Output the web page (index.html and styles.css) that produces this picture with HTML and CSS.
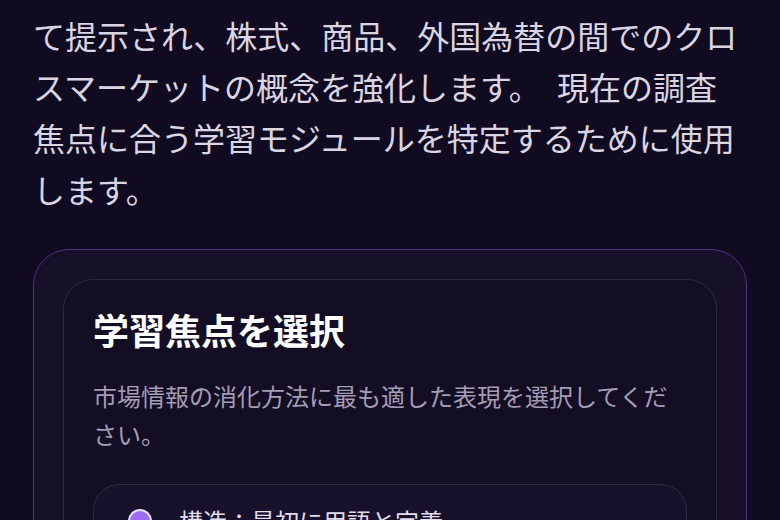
FILE: index.html
```html
<!DOCTYPE html>
<html lang="ja">
<head>
<meta charset="utf-8">
<title>学習焦点を選択</title>
<link rel="stylesheet" href="styles.css">
</head>
<body>
<main class="page">
  <p class="intro">て提示され、株式、商品、外国為替の間でのクロスマーケットの概念を強化します。 現在の調査焦点に合う学習モジュールを特定するために使用します。</p>
  <section class="shell">
    <div class="panel">
      <h2 class="panel-title">学習焦点を選択</h2>
      <p class="panel-sub">市場情報の消化方法に最も適した表現を選択してください。</p>
      <div class="options">
        <label class="option">
          <span class="radio"></span>
          <span class="option-text">構造：最初に用語と定義</span>
        </label>
      </div>
    </div>
  </section>
</main>
</body>
</html>
```

FILE: styles.css
```css
html, body {
  margin: 0;
  padding: 0;
  background: #110b21;
}
body {
  font-family: "Noto Sans CJK JP", "Noto Sans", sans-serif;
  overflow: hidden;
  height: 520px;
}
.page {
  padding: 10px 33px 40px;
}
.intro {
  margin: 0;
  font-size: 32px;
  line-height: 1.6;
  color: #d9d5e3;
  word-spacing: 9px;
}
.shell {
  margin-top: 34px;
  border: 1px solid #4e3389;
  border-radius: 36px;
  background: #171029;
  padding: 29px;
}
.panel {
  border: 1px solid #2f2844;
  border-radius: 30px;
  background: #140e25;
  padding: 26px 29px 29px;
}
.panel-title {
  margin: 0;
  font-size: 36px;
  line-height: 1.3;
  font-weight: 700;
  color: #ffffff;
}
.panel-sub {
  margin: 24px 0 0;
  font-size: 24px;
  line-height: 1.6;
  color: #a49db5;
}
.options {
  margin-top: 31px;
  display: flex;
  flex-direction: column;
  gap: 16px;
}
.option {
  display: flex;
  align-items: center;
  gap: 27px;
  border: 1px solid #302946;
  border-radius: 26px;
  background: #18112c;
  padding: 18px 34px;
}
.radio {
  flex: none;
  width: 20px;
  height: 20px;
  border-radius: 50%;
  border: 2px solid #ece2ff;
  background: #9c6cf2;
}
.option-text {
  font-size: 24px;
  line-height: 1.5;
  color: #e2deec;
}
```
